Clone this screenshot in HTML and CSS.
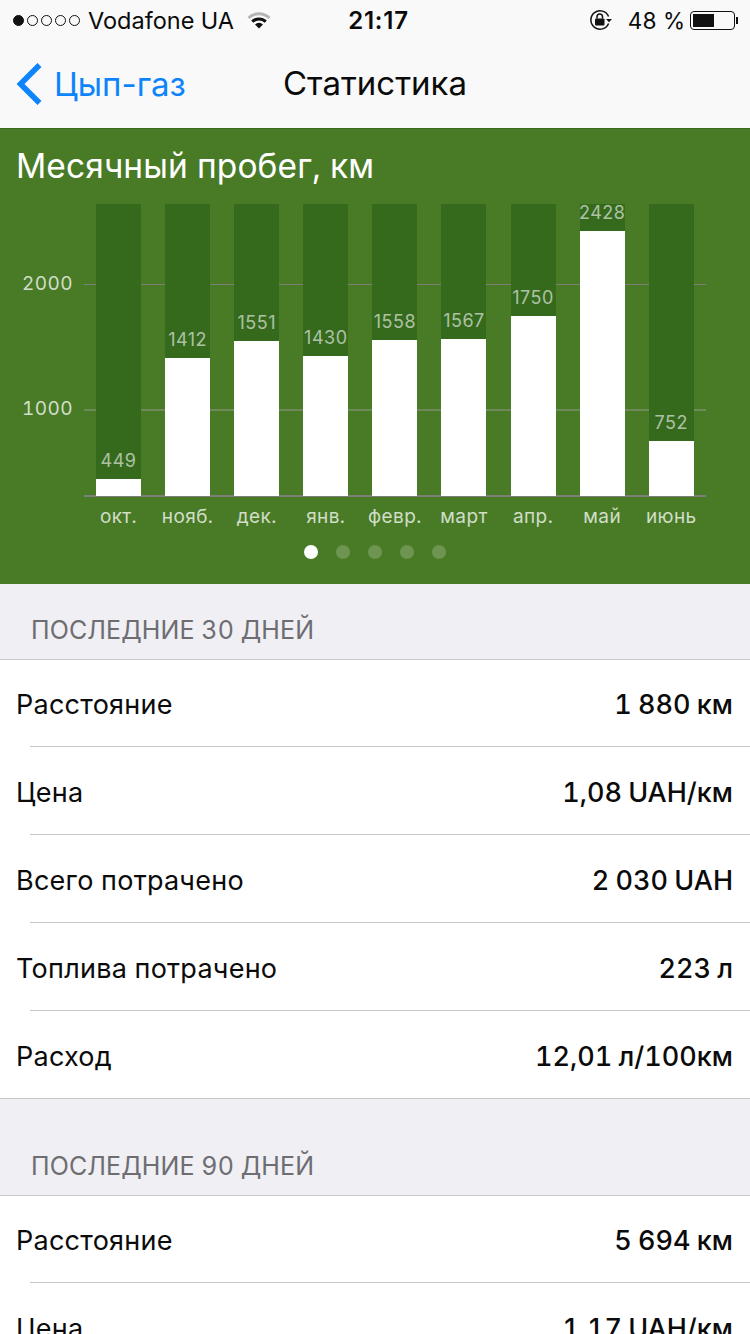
FILE: index.html
```html
<!DOCTYPE html>
<html>

	<head>
		<meta charset="UTF-8">
		<title>Статистика</title>
		<link rel="stylesheet" href="styles.css">
	</head>

	<body>
		<div class="status">
			<div class="carrier">
				<span class="signal"><i class="on"></i><i></i><i></i><i></i><i></i></span>
				<span>Vodafone UA</span>
				<svg class="wifi" width="24" height="18" viewBox="0 0 24 18">
					<path d="M0.5 5.8A16.5 16.5 0 0 1 23.5 5.8L21.4 8A13.5 13.5 0 0 0 2.6 8Z" fill="#b5b5b5"/>
					<path d="M4.2 9.6A11.3 11.3 0 0 1 19.8 9.6L17.7 11.8A8.3 8.3 0 0 0 6.3 11.8Z" fill="#111"/>
					<path d="M8 13.4A6 6 0 0 1 16 13.4L12 17.6Z" fill="#111"/>
				</svg>
			</div>
			<div class="clock">21:17</div>
			<div class="battery">
				<svg class="lock" width="24" height="22" viewBox="0 0 24 22">
					<path d="M19.6 7.5A9.2 9.2 0 1 0 19.6 14.5" fill="none" stroke="#111" stroke-width="1.5"/>
					<path d="M17 10h6l-3 3.2Z" fill="#111"/>
					<rect x="6" y="9.5" width="9.5" height="7" rx="1" fill="#111"/>
					<path d="M8 9.5V7.8a2.75 2.75 0 0 1 5.5 0V9.5" fill="none" stroke="#111" stroke-width="1.5"/>
				</svg>
				<span class="percent">48 %</span>
				<span class="cell"><span class="charge"></span></span>
				<span class="nub"></span>
			</div>
		</div>

		<div class="nav">
			<a class="back">
				<svg width="27" height="44" viewBox="0 0 27 44">
					<path d="M23.5 3L4.5 22L23.5 41" fill="none" stroke="#0d84fb" stroke-width="5.6"/>
				</svg>
				<span>Цып-газ</span>
			</a>
			<div class="nav-title">Статистика</div>
		</div>

		<div class="panel">
			<div class="panel-title">Месячный пробег, км</div>
			<div class="chart">
				<div class="rule rule-2000"></div>
				<div class="rule rule-1000"></div>
				<div class="rule rule-base"></div>
				<div class="tick tick-2000">2000</div>
				<div class="tick tick-1000">1000</div>

				<div class="col">
					<div class="track"><span class="num">449</span><div class="fill" style="height: 17px"></div></div>
					<div class="month">окт.</div>
				</div>
				<div class="col">
					<div class="track"><span class="num">1412</span><div class="fill" style="height: 138px"></div></div>
					<div class="month">нояб.</div>
				</div>
				<div class="col">
					<div class="track"><span class="num">1551</span><div class="fill" style="height: 155px"></div></div>
					<div class="month">дек.</div>
				</div>
				<div class="col">
					<div class="track"><span class="num">1430</span><div class="fill" style="height: 140px"></div></div>
					<div class="month">янв.</div>
				</div>
				<div class="col">
					<div class="track"><span class="num">1558</span><div class="fill" style="height: 156px"></div></div>
					<div class="month">февр.</div>
				</div>
				<div class="col">
					<div class="track"><span class="num">1567</span><div class="fill" style="height: 157px"></div></div>
					<div class="month">март</div>
				</div>
				<div class="col">
					<div class="track"><span class="num">1750</span><div class="fill" style="height: 180px"></div></div>
					<div class="month">апр.</div>
				</div>
				<div class="col">
					<div class="track"><span class="num">2428</span><div class="fill" style="height: 265px"></div></div>
					<div class="month">май</div>
				</div>
				<div class="col">
					<div class="track"><span class="num">752</span><div class="fill" style="height: 55px"></div></div>
					<div class="month">июнь</div>
				</div>
			</div>
			<div class="pager"><i class="on"></i><i></i><i></i><i></i><i></i></div>
		</div>

		<div class="section-head">ПОСЛЕДНИЕ 30 ДНЕЙ</div>
		<div class="list">
			<div class="row"><div class="row-in"><span>Расстояние</span><b>1 880 км</b></div></div>
			<div class="row"><div class="row-in"><span>Цена</span><b>1,08 UAH/км</b></div></div>
			<div class="row"><div class="row-in"><span>Всего потрачено</span><b>2 030 UAH</b></div></div>
			<div class="row"><div class="row-in"><span>Топлива потрачено</span><b>223 л</b></div></div>
			<div class="row"><div class="row-in"><span>Расход</span><b>12,01 л/100км</b></div></div>
		</div>

		<div class="section-head">ПОСЛЕДНИЕ 90 ДНЕЙ</div>
		<div class="list">
			<div class="row"><div class="row-in"><span>Расстояние</span><b>5 694 км</b></div></div>
			<div class="row"><div class="row-in"><span>Цена</span><b>1,17 UAH/км</b></div></div>
		</div>
	</body>

</html>
```

FILE: styles.css
```css
html,
body {
	height: 1334px;
	overflow: hidden;
}

body {
	margin: 0;
	background-color: #efeff4;
	color: #0b0b0b;
	font-family: Inter, "Noto Sans", sans-serif;
	font-variant-numeric: tabular-nums;
}

/* status bar */
.status {
	height: 40px;
	padding: 0 12px 0 13px;
	background-color: #f9f9f9;
	display: grid;
	grid-template-columns: 1fr auto 1fr;
	align-items: center;
	font-size: 23.5px;
}

.carrier {
	display: flex;
	align-items: center;
}

.signal {
	display: flex;
	gap: 3px;
	margin-right: 8px;
}

.signal i {
	width: 11px;
	height: 11px;
	box-sizing: border-box;
	border: 1px solid #111;
	border-radius: 50%;
}

.signal i.on {
	background-color: #111;
}

.wifi {
	margin-left: 13px;
}

.clock {
	margin-left: 6px;
	font-size: 24px;
	font-weight: 600;
	font-variant-numeric: normal;
	letter-spacing: 0.8px;
}

.battery {
	display: flex;
	align-items: center;
	justify-content: flex-end;
}

.percent {
	margin: 0 5px 0 15px;
	font-size: 22.5px;
}

.cell {
	width: 45px;
	height: 19px;
	box-sizing: border-box;
	padding: 2px;
	border: 1.5px solid #111;
	border-radius: 4px;
}

.charge {
	display: block;
	width: 21px;
	height: 100%;
	background-color: #111;
}

.nub {
	width: 2px;
	height: 7px;
	margin-left: 1px;
	background-color: #111;
}

/* nav bar */
.nav {
	height: 88px;
	box-sizing: border-box;
	padding-bottom: 2px;
	background-color: #f9f9f9;
	position: relative;
	display: flex;
	align-items: center;
	justify-content: center;
}

.back {
	position: absolute;
	left: 16px;
	top: 22px;
	display: flex;
	align-items: center;
	gap: 11px;
	color: #0d84fb;
	font-size: 33px;
	font-variant-numeric: normal;
}

.nav-title {
	font-size: 33px;
}

/* chart */
.panel {
	height: 456px;
	background-color: #497b26;
	border-top: 1px solid #3b6a1e;
	box-sizing: border-box;
}

.panel-title {
	height: 75px;
	padding-left: 16px;
	line-height: 74px;
	color: #fff;
	font-size: 33.5px;
	letter-spacing: 0.1px;
}

.chart {
	position: relative;
	display: flex;
	gap: 24.1px;
	padding-left: 96px;
}

.rule {
	position: absolute;
	left: 84px;
	width: 622px;
	height: 1px;
	background-color: #7b7f78;
}

.rule-2000 {
	top: 80px;
}

.rule-1000 {
	top: 205px;
	height: 2px;
	background-color: #6d8a58;
}

.rule-base {
	top: 291px;
	height: 2px;
}

.tick {
	position: absolute;
	right: 677px;
	color: rgba(255, 255, 255, 0.75);
	font-size: 19px;
	line-height: 24px;
	letter-spacing: 0.4px;
}

.tick-2000 {
	top: 68px;
}

.tick-1000 {
	top: 193px;
}

.col {
	position: relative;
	width: 45px;
	display: flex;
	flex-direction: column;
	align-items: center;
}

.track {
	width: 100%;
	height: 292px;
	background-color: #356a1d;
	display: flex;
	flex-direction: column;
	justify-content: flex-end;
	align-items: center;
}

.num {
	flex-shrink: 0;
	color: rgba(255, 255, 255, 0.6);
	font-size: 18px;
	font-variant-numeric: normal;
	line-height: 36px;
	letter-spacing: 0.5px;
}

.fill {
	flex-shrink: 0;
	width: 100%;
	background-color: #fff;
}

.month {
	margin-top: 8px;
	line-height: 26px;
	color: rgba(255, 255, 255, 0.75);
	font-size: 19px;
	letter-spacing: 0.4px;
	white-space: nowrap;
}

.pager {
	display: flex;
	justify-content: center;
	gap: 18px;
	margin: 15px 0 0 0;
}

.pager i {
	width: 14px;
	height: 14px;
	border-radius: 50%;
	background-color: rgba(255, 255, 255, 0.2);
}

.pager i.on {
	background-color: #fff;
}

/* lists */
.section-head {
	height: 76px;
	padding: 0 31px;
	box-sizing: border-box;
	line-height: 93px;
	color: #6d6d72;
	font-size: 25px;
	letter-spacing: 0.1px;
	border-bottom: 1px solid #c8c7cc;
}

.list {
	background-color: #fff;
	border-bottom: 1px solid #c8c7cc;
	margin-bottom: 21px;
}

.row {
	height: 88px;
	padding-left: 16px;
}

.row:first-child,
.row:last-child {
	height: 87px;
}

.row-in {
	height: 87px;
	box-sizing: border-box;
	padding: 2px 17px 0 0;
	display: flex;
	align-items: center;
	justify-content: space-between;
	font-size: 27px;
}

.row-in span {
	letter-spacing: 0.25px;
}

.row b {
	font-weight: 500;
	word-spacing: -1px;
}

.row + .row {
	position: relative;
}

.row + .row .row-in {
	padding-top: 4px;
}

.row + .row::before {
	content: "";
	position: absolute;
	left: 30px;
	right: 0;
	top: -1px;
	height: 1px;
	background-color: #c8c7cc;
}
```
